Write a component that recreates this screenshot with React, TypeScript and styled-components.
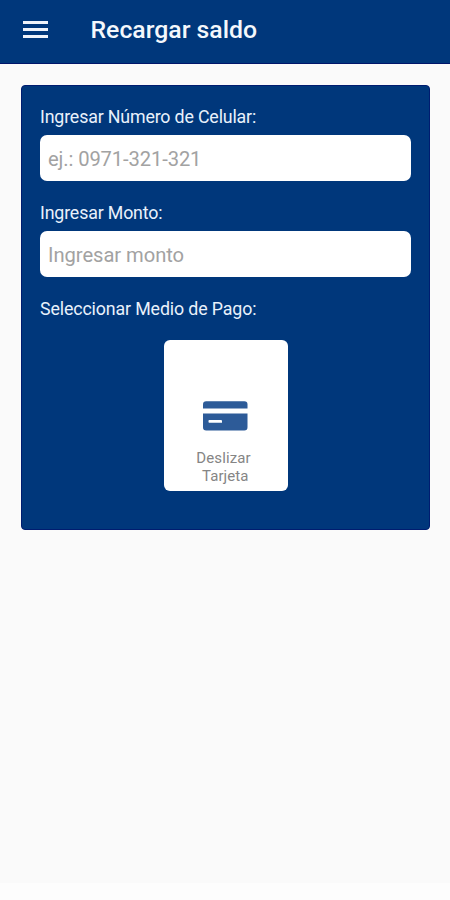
import React from "react";
import styled, { createGlobalStyle } from "styled-components";

const GlobalStyle = createGlobalStyle`
  * { box-sizing: border-box; }
  body { margin: 0; background: #fafafa; font-family: Roboto, "Liberation Sans", sans-serif; }
`;

const Screen = styled.div`
  display: flex;
  flex-direction: column;
  height: 900px;
  width: 450px;
  overflow: hidden;
`;

const AppBar = styled.header`
  display: flex;
  align-items: center;
  height: 64px;
  flex: none;
  padding: 0 0 4px 23px;
  background: #00377b;
  border-bottom: 1px solid #00156a;
`;

const MenuButton = styled.button`
  display: flex;
  flex-direction: column;
  gap: 4px;
  width: 25px;
  padding: 0;
  margin-right: 42.5px;
  border: 0;
  background: none;
`;

const MenuLine = styled.span`
  height: 3px;
  background: #f0f3fa;
`;

const Title = styled.h1`
  margin: 0;
  padding-top: 1px;
  font-size: 24.8px;
  line-height: 30px;
  font-weight: 500;
  color: #f4f7fc;
  white-space: nowrap;
`;

const Content = styled.main`
  flex: 1;
  padding: 20.5px 20px 0 21px;
`;

const Card = styled.form`
  display: flex;
  flex-direction: column;
  height: 445px;
  padding: 20px 18px 0;
  border-radius: 4px;
  background: #00377b;
  border: 1px solid #001c70;
`;

const Field = styled.div`
  display: flex;
  flex-direction: column;
  height: 96px;
`;

const Label = styled.label<{ $spacing?: string }>`
  display: block;
  height: 29px;
  font-size: 17.8px;
  line-height: 22px;
  letter-spacing: ${(p) => p.$spacing ?? "-0.16px"};
  color: #e9f1fb;
  white-space: nowrap;
`;

const Input = styled.input<{ $spacing: string }>`
  width: 371px;
  height: 46px;
  padding: 2px 8px 0;
  border: 0;
  border-radius: 7px;
  outline: 0;
  background: #fff;
  font-family: inherit;
  font-size: 20.2px;
  letter-spacing: ${(p) => p.$spacing};
  &::placeholder { color: #a2a2a2; opacity: 1; }
`;

const PaymentOption = styled.button`
  display: flex;
  flex-direction: column;
  align-items: center;
  width: 124px;
  height: 151px;
  margin: 13px 0 0 123.5px;
  padding: 61px 0 0;
  border: 0;
  border-radius: 6px;
  background: #fff;
  font-family: inherit;
`;

const OptionText = styled.span`
  margin-top: 18px;
  padding-right: 4px;
  font-size: 15px;
  line-height: 18px;
  letter-spacing: 0.1px;
  color: #858585;
  white-space: pre;
  text-align: center;
`;

const BottomStrip = styled.footer`
  height: 17px;
  flex: none;
  background: #fdfdfd;
`;

const CreditCardIcon = () => (
  <svg width="45" height="30" viewBox="0 0.5 45 30" fill="#2d5b98">
    <path d="M0 8V4Q0 0.8 3.2 0.8H41.3Q44.5 0.8 44.5 4V8Z" />
    <path
      fillRule="evenodd"
      d="M0 13H44.5V26.8Q44.5 30 41.3 30H3.2Q0 30 0 26.8ZM6.3 19.5H18Q19 19.5 19 20.5V22.3H6.3Q5.5 22.3 5.5 21.5V20.3Q5.5 19.5 6.3 19.5Z"
    />
  </svg>
);

export default function App() {
  return (
    <Screen>
      <GlobalStyle />
      <AppBar>
        <MenuButton type="button" aria-label="Menú">
          <MenuLine />
          <MenuLine />
          <MenuLine />
        </MenuButton>
        <Title>Recargar saldo</Title>
      </AppBar>
      <Content>
        <Card>
          <Field>
            <Label htmlFor="celular">Ingresar Número de Celular:</Label>
            <Input id="celular" placeholder="ej.: 0971-321-321" $spacing="-0.12px" />
          </Field>
          <Field>
            <Label htmlFor="monto">Ingresar Monto:</Label>
            <Input id="monto" placeholder="Ingresar monto" $spacing="-0.06px" />
          </Field>
          <Label as="div" $spacing="-0.13px">Seleccionar Medio de Pago:</Label>
          <PaymentOption type="button">
            <CreditCardIcon />
            <OptionText>{"Deslizar\n Tarjeta"}</OptionText>
          </PaymentOption>
        </Card>
      </Content>
      <BottomStrip />
    </Screen>
  );
}
